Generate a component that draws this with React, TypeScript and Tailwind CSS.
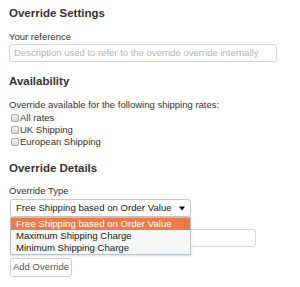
export default function App() {
  const rates = ["All rates", "UK Shipping", "European Shipping"];
  const options = [
    "Free Shipping based on Order Value",
    "Maximum Shipping Charge",
    "Minimum Shipping Charge",
  ];

  return (
    <div className="min-h-screen bg-white pt-[6px] pl-[9px] text-[#333] font-['Liberation_Sans',Arial,sans-serif]">
      {/* Override Settings */}
      <h2 className="h-[14px] text-[11.5px] font-bold leading-[14px]">Override Settings</h2>
      <label className="mt-[11px] block h-[12px] text-[9.5px] leading-[12px]">Your reference</label>
      <div className="mt-[1px] flex h-[18px] w-[268px] items-center rounded-[3px] border border-[#d6d6d6] pl-[4px] text-[9.5px] text-[#b4b4b4]">
        Description used to refer to the override override internally
      </div>

      {/* Availability */}
      <h2 className="mt-[12px] h-[14px] text-[11.5px] font-bold leading-[14px]">Availability</h2>
      <p className="mt-[11px] h-[12px] text-[9.5px] leading-[12px]">
        Override available for the following shipping rates:
      </p>
      <div className="mt-[1px] flex flex-col">
        {rates.map((r) => (
          <div key={r} className="flex h-[12px] items-center text-[9.5px] leading-[12px]">
            <span className="ml-[2px] mr-[1px] h-[8px] w-[8px] rounded-[2px] border border-[#a8a8a8] bg-gradient-to-b from-[#f4f4f4] to-[#d8d8d8]" />
            {r}
          </div>
        ))}
      </div>

      {/* Override Details */}
      <h2 className="mt-[13px] h-[14px] text-[11.5px] font-bold leading-[14px]">Override Details</h2>
      <label className="mt-[10px] block h-[12px] text-[9.5px] leading-[12px]">Override Type</label>
      <div className="relative mt-[2px] ml-[1px] w-[181px]">
        <div className="flex h-[18px] items-center justify-between rounded-[3px] border border-[#c8c8c8] bg-white pl-[5px] pr-[5px] text-[9.6px] text-[#222]">
          <span>Free Shipping based on Order Value</span>
          <svg width="6" height="5" viewBox="0 0 6 5">
            <path d="M0 0.5h6L3 4.5z" fill="#111" />
          </svg>
        </div>
        <div className="absolute left-0 top-full z-10 flex w-full flex-col border border-[#b9c2cc] bg-[#f6f6f6] py-0 text-[9.6px] shadow-sm">
          {options.map((o, i) => (
            <div
              key={o}
              className={
                i === 0
                  ? "flex h-[12px] items-center bg-[#ee7b47] pl-[5px] text-white"
                  : "flex h-[12px] items-center pl-[5px] text-[#222]"
              }
            >
              {o}
            </div>
          ))}
        </div>
      </div>
      <div className="mt-[12px] ml-[1px] h-[18px] w-[246px] rounded-[3px] border border-[#d6d6d6]" />
      <button className="mt-[11px] ml-[1px] flex h-[19px] w-[62px] items-center justify-center rounded-[3px] border border-[#cfcfcf] bg-white text-[9.5px] text-[#555]">
        Add Override
      </button>
    </div>
  );
}
